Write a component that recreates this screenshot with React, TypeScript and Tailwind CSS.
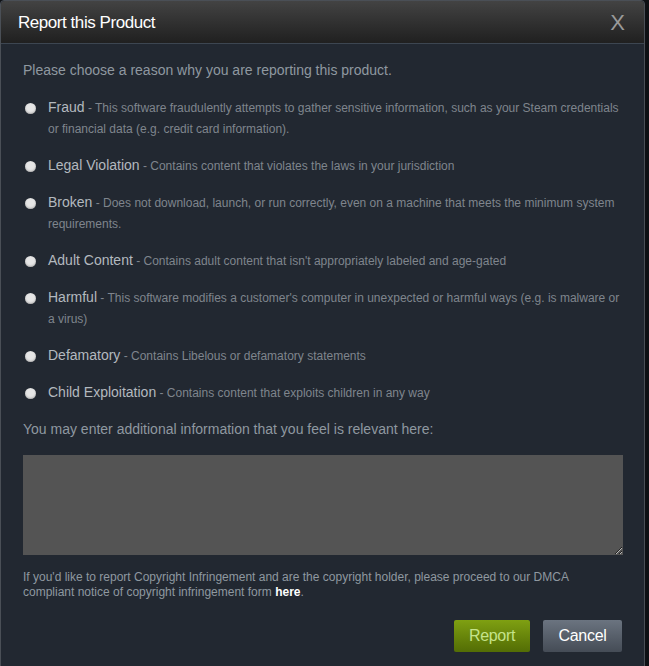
import React from 'react';

const reasons = [
    { title: 'Fraud', desc: 'This software fraudulently attempts to gather sensitive information, such as your Steam credentials or financial data (e.g. credit card information).' },
    { title: 'Legal Violation', desc: 'Contains content that violates the laws in your jurisdiction' },
    { title: 'Broken', desc: 'Does not download, launch, or run correctly, even on a machine that meets the minimum system requirements.' },
    { title: 'Adult Content', desc: "Contains adult content that isn't appropriately labeled and age-gated" },
    { title: 'Harmful', desc: "This software modifies a customer's computer in unexpected or harmful ways (e.g. is malware or a virus)" },
    { title: 'Defamatory', desc: 'Contains Libelous or defamatory statements' },
    { title: 'Child Exploitation', desc: 'Contains content that exploits children in any way' },
];

const App: React.FC = () => {
    return (
        <div className="w-[649px] h-[666px] overflow-hidden bg-[#0e1014] font-['Liberation_Sans',Arial,sans-serif]">
            <div className="w-[645px] h-[700px] flex flex-col rounded-t-[4px] border border-[#4a4f56] bg-[#222831]">
                {/* header */}
                <div className="h-[43px] flex items-center justify-between pl-[17px] pr-[19px] pt-[2px] rounded-t-[4px] bg-gradient-to-b from-[#434343] to-[#202020] border-b border-[#3d4651]">
                    <span className="text-white text-[17px] tracking-[-0.45px]">Report this Product</span>
                    <span className="text-[#9a9a9a] text-[22px] leading-none">X</span>
                </div>

                <div className="px-[22px] pt-[16px] flex flex-col">
                    <p className="text-[#8f98a0] text-[14px] leading-[20px]">Please choose a reason why you are reporting this product.</p>

                    <div className="mt-[17px] flex flex-col gap-[16px]">
                        {reasons.map((r) => (
                            <label key={r.title} className="flex items-start cursor-pointer">
                                <span className="mt-[6px] ml-[2px] w-[11px] h-[11px] shrink-0 rounded-full bg-[#e6e6e6] shadow-[inset_0_-1px_2px_rgba(0,0,0,0.25)]" />
                                <span className="ml-[12px] text-[14px] leading-[21px] pr-[2px]">
                                    <span className="text-[#b3b9bf] leading-[14px]">{r.title}</span>
                                    <span className="text-[#7f858d] text-[12px] leading-[12px]"> - {r.desc}</span>
                                </span>
                            </label>
                        ))}
                    </div>

                    <p className="mt-[16px] text-[#8f98a0] text-[14px] leading-[20px]">You may enter additional information that you feel is relevant here:</p>

                    <textarea className="mt-[16px] w-[600px] h-[100px] bg-[#545454] border-none outline-none resize-y text-white" />

                    <p className="mt-[15px] text-[#8f98a0] text-[12px] leading-[15px]">
                        If you'd like to report Copyright Infringement and are the copyright holder, please proceed to our DMCA compliant notice of copyright infringement form <a className="text-white font-bold">here</a>.
                    </p>

                    <div className="mt-[20px] flex justify-end gap-[13px] pr-[0px]">
                        <button className="w-[76px] h-[32px] rounded-[2px] bg-gradient-to-b from-[#7fa012] to-[#536d05] text-[#c5e38a] text-[16px] tracking-[-0.3px]">Report</button>
                        <button className="w-[79px] h-[32px] rounded-[2px] bg-gradient-to-b from-[#6b7480] to-[#454c56] text-white text-[16px] tracking-[-0.3px]">Cancel</button>
                    </div>
                </div>
            </div>
        </div>
    );
};

export default App;
